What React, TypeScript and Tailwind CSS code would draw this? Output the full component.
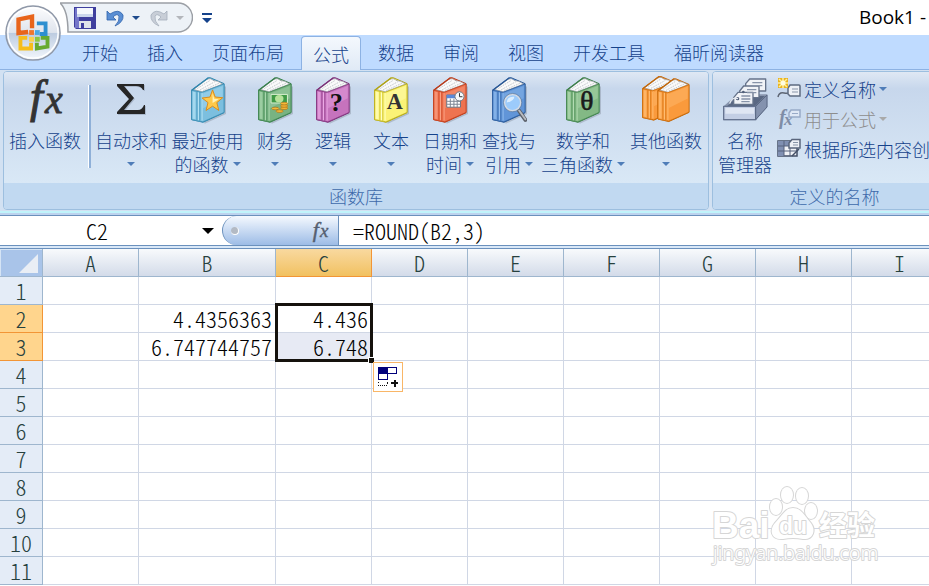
import React from "react";

const tabs = ["开始", "插入", "页面布局", "公式", "数据", "审阅", "视图", "开发工具", "福昕阅读器"];

const columns = [
  { name: "A", width: "w-24" },
  { name: "B", width: "w-[137px]" },
  { name: "C", width: "w-24" },
  { name: "D", width: "w-24" },
  { name: "E", width: "w-24" },
  { name: "F", width: "w-24" },
  { name: "G", width: "w-24" },
  { name: "H", width: "w-24" },
  { name: "I", width: "w-24" },
];

const rows = [1, 2, 3, 4, 5, 6, 7, 8, 9, 10, 11];

const cells: Record<string, string> = {
  B2: "4.4356363",
  B3: "6.747744757",
  C2: "4.436",
  C3: "6.748",
};

const Arrow = ({ className = "text-[#4f7db8]" }: { className?: string }) => (
  <svg viewBox="0 0 8 4" className={`w-2 h-1 shrink-0 ${className}`} fill="currentColor" aria-hidden="true">
    <path d="M0 0h8L4 4z" />
  </svg>
);

type BookProps = {
  light: string;
  main: string;
  dark: string;
  children?: React.ReactNode;
};

const BookShape = ({ light, main, dark }: BookProps) => (
  <g strokeLinejoin="round">
    <path d="M3 41 54 3 60 3 102 21V110L38 139 3 131z" fill={main} stroke={dark} strokeWidth="3" />
    <path d="M9 39 48 9Q62 2 68 11Q84 12 98 22L36 46z" fill="#fafafa" stroke="#8a8f96" strokeWidth="2" />
    <path d="M20 36 58 12M29 40 74 15M38 42 86 20" stroke="#c3c7cc" strokeWidth="3" strokeDasharray="5 3" />
    <path d="M3 41 33 47V138L3 131z" fill={main} />
    <path d="M33 47 102 22V109L36 138z" fill={main} />
    <path d="M38 51 98 28V66L38 96z" fill={light} opacity=".4" />
    <path d="M6 45 15 47V130L6 128z" fill={light} opacity=".7" />
    <path d="M19 46V133M28 47V135" stroke={dark} strokeWidth="3" opacity=".55" />
    <path d="M24 47V133M35 48V134" stroke={light} strokeWidth="3" />
    <path d="M3 41 34 48 102 22V109L37 138 3 131z" fill="none" stroke={dark} strokeWidth="2.500" opacity=".85" />
    <path d="M3 41 54 3" stroke={dark} strokeWidth="4" />
  </g>
);

const Book = ({ children, ...colors }: BookProps) => (
  <svg viewBox="-2 -1 110 144" className="w-9 h-12" fill="none" aria-hidden="true">
    <path d="M42 141 106 112V30" stroke="#7f8a99" strokeWidth="5" opacity=".4" />
    <BookShape {...colors} />
    {children}
  </svg>
);

const StarIcon = () => (
  <Book light="#b4e2f4" main="#7cbfdf" dark="#2f86ad">
    <path
      d="M67 40 75 62 98 64 80 79 86 103 67 90 47 103 53 79 35 65 59 62z"
      fill="#ffc94a"
      stroke="#d98b1c"
      strokeWidth="3"
    />
    <path d="M67 50 72 67 86 69 67 80z" fill="#fff2b8" />
  </Book>
);

const MoneyIcon = () => (
  <Book light="#a9d8ae" main="#78b382" dark="#38804b">
    <path d="M41 54H91V80H41z" fill="#3f9a46" stroke="#d9efd0" strokeWidth="3" />
    <ellipse cx="66" cy="67" rx="13" ry="11" fill="#b6e29b" />
    <g fill="#f4b93a" stroke="#a86d12" strokeWidth="2">
      <ellipse cx="81" cy="96" rx="11" ry="4" />
      <ellipse cx="81" cy="89" rx="11" ry="4" />
      <ellipse cx="81" cy="82" rx="11" ry="4" />
      <ellipse cx="54" cy="97" rx="11" ry="4" />
      <ellipse cx="67" cy="105" rx="11" ry="4" />
    </g>
  </Book>
);

const LogicIcon = () => (
  <Book light="#ecaae6" main="#c673bd" dark="#7c2f78">
    <text x="63" y="104" textAnchor="middle" fontFamily="Liberation Serif, serif" fontWeight="700" fontSize="80" fill="#111">?</text>
  </Book>
);

const TextIcon = () => (
  <Book light="#ffffc2" main="#fbf276" dark="#b3a50f">
    <text x="65" y="98" textAnchor="middle" fontFamily="Liberation Serif, serif" fontWeight="700" fontSize="68" fill="#333">A</text>
  </Book>
);

const DateIcon = () => (
  <Book light="#f9a184" main="#ee7350" dark="#bd3a17">
    <path d="M43 56H85V93H43z" fill="#fff" stroke="#69727f" strokeWidth="3" />
    <path d="M43 55H76V66H43z" fill="#5a88d8" />
    <path d="M44 75H85M44 84H85M54 67V93M65 67V93M75 67V93" stroke="#7c8593" strokeWidth="3" />
    <circle cx="82" cy="60" r="14" fill="#f7f9fb" stroke="#6c7480" strokeWidth="3" />
    <path d="M82 50V61H91" stroke="#333" strokeWidth="3" />
  </Book>
);

const SearchIcon = () => (
  <Book light="#92bdee" main="#6195d8" dark="#275796">
    <path d="M83 103 103 132" stroke="#5b6069" strokeWidth="12" strokeLinecap="round" />
    <path d="M84 103 103 130" stroke="#b6bac0" strokeWidth="6" strokeLinecap="round" />
    <circle cx="64" cy="79" r="25" fill="#9ccbfb" stroke="#d4dbe5" strokeWidth="5" />
    <circle cx="64" cy="79" r="28" stroke="#5f7897" strokeWidth="2" />
    <path d="M46 79Q48 59 69 61Q70 73 46 79z" fill="#dceeff" />
  </Book>
);

const MathIcon = () => (
  <Book light="#b4dcb3" main="#83b985" dark="#3c8049">
    <text x="65" y="103" textAnchor="middle" fontFamily="Liberation Serif, serif" fontSize="84" fill="#1a1a1a" stroke="#1a1a1a" strokeWidth="2">θ</text>
  </Book>
);

const MoreIcon = () => {
  const colors = { light: "#ffc077", main: "#fa9a3c", dark: "#c56808" };
  return (
    <svg viewBox="-2 -1 154 144" className="w-[51px] h-12" fill="none" aria-hidden="true">
      <g transform="translate(0 -3) scale(.97)">
        <BookShape {...colors} />
      </g>
      <g transform="translate(46 4) scale(.95)">
        <BookShape {...colors} />
      </g>
    </svg>
  );
};

const FxIcon = ({ className = "" }: { className?: string }) => (
  <svg viewBox="0 0 42 48" className={`overflow-visible ${className}`} fill="currentColor" stroke="currentColor" aria-hidden="true">
    <g fontFamily="Liberation Serif, serif" fontStyle="italic">
      <text x="6" y="36" fontSize="46" strokeWidth="1">f</text>
      <text x="21" y="37" fontSize="40" strokeWidth=".8">x</text>
    </g>
  </svg>
);

const SigmaIcon = () => (
  <svg viewBox="0 0 34 46" className="w-[34px] h-12" aria-hidden="true">
    <path d="M3 7H30V13H29Q27 9 22 9H10L20 21 10 33H24Q28 33 30 28H31V37H3V35L15 22 3 9z" fill="#8a97ab" opacity=".5" transform="translate(1 1)" />
    <path d="M3 7H30V13H29Q27 9 22 9H10L20 21 10 33H24Q28 33 30 28H31V37H3V35L15 22 3 9z" fill="#262626" />
  </svg>
);

const NameManagerIcon = () => (
  <svg viewBox="0 0 135 138" className="w-[45px] h-12" fill="none" strokeLinejoin="round" aria-hidden="true">
    <path d="M2 88 42 52H133V90L98 130H2z" fill="#8794ad" />
    <path d="M12 88 45 57H126L96 88z" fill="#5a6883" />
    <g fill="#f1f3f7" stroke="#66738a" strokeWidth="4">
      <path d="M68 20 80 6H128V42H68z" />
      <path d="M50 42 62 27H108V62H50z" />
      <path d="M32 62 45 46H90V82H32z" />
    </g>
    <path d="M88 17H118M88 26H118M72 38H100M72 47H100M55 57H82M55 66H82M55 74H80" stroke="#8793a8" strokeWidth="4" />
    <circle cx="44" cy="65" r="5" fill="#53617b" />
    <circle cx="61" cy="45" r="4" fill="#53617b" />
    <path d="M20 80Q26 58 45 65" stroke="#e5e9f0" strokeWidth="4" />
    <path d="M2 88H98V128H2z" fill="#c3cee4" stroke="#667491" strokeWidth="4" />
    <path d="M7 93H93V110H7z" fill="#dfe6f3" />
    <path d="M98 88 132 54V90L98 128z" fill="#8492ae" stroke="#5b6984" strokeWidth="3" />
  </svg>
);

const DefineIcon = () => (
  <svg viewBox="0 0 24 22" className="w-6 h-[22px] shrink-0" fill="none" aria-hidden="true">
    <path d="M1 19Q2 14 7 15T13 14" stroke="#5e6674" strokeWidth="1.500" />
    <path d="M11 10 13 7H22Q23 7 23 8V18H13L11 16z" fill="#eef1f6" stroke="#5e6b80" strokeWidth="1.500" />
    <path d="M15 11H21M15 14H21" stroke="#8995a8" />
    <path d="M1 0H11V10H1z" fill="#e9b321" />
    <path d="M6 0V10M1 5H11M2 1 10 9M10 1 2 9" stroke="#fff09a" strokeWidth="1.500" />
    <circle cx="6" cy="5" r="2.500" fill="#fffce0" />
  </svg>
);

const UseFormulaIcon = () => (
  <svg viewBox="0 0 24 22" className="w-6 h-[22px] shrink-0 overflow-visible" aria-hidden="true">
    <g fontFamily="Liberation Serif, serif" fontStyle="italic" fontWeight="700" fill="#7f8da6">
      <text x="2" y="16" fontSize="20">f</text>
      <text x="7" y="17" fontSize="17">x</text>
    </g>
    <path d="M12 5 14 2H23V9H12z" fill="#dfe8f5" stroke="#98aac7" strokeWidth="1.500" />
    <path d="M15 5.500H21" stroke="#98aac7" />
  </svg>
);

const CreateIcon = () => (
  <svg viewBox="0 0 24 22" className="w-6 h-[22px] shrink-0" fill="none" aria-hidden="true">
    <path d="M1 3H20V18H1z" fill="#f1f3f7" stroke="#434f66" strokeWidth="1.500" />
    <path d="M1 3H13V8H1z M1 8H7V18H1z" fill="#8090b2" />
    <path d="M1 8H20M1 13H20M7 3V18M13 3V18" stroke="#56637c" strokeWidth="1" />
    <path d="M12 5 15 1.500H23V10H12z" fill="#eef1f6" stroke="#5a667c" strokeWidth="1.500" />
    <path d="M16 4.500H21M16 7H21" stroke="#8995a8" />
    <path d="M15 18 22 11" stroke="#434f66" strokeWidth="1.500" />
  </svg>
);

const OfficeButton = () => (
  <button aria-label="Office" className="absolute left-1 top-1 z-10">
    <svg viewBox="0 0 60 60" className="w-[58px] h-[58px]" fill="none" aria-hidden="true">
      <defs>
        <linearGradient id="orb" x1="0" y1="0" x2="0" y2="1">
          <stop offset="0" stopColor="#fdfdfe" />
          <stop offset=".49" stopColor="#dfe4ed" />
          <stop offset=".5" stopColor="#bccbe0" />
          <stop offset="1" stopColor="#f4f8fd" />
        </linearGradient>
      </defs>
      <circle cx="30" cy="30" r="28" fill="url(#orb)" stroke="#8f98a8" strokeWidth="1.500" />
      <circle cx="30" cy="30" r="26" stroke="#fff" strokeWidth="1.500" />
      <path d="M25 29 15 30V16L29 13V25" stroke="#e8641b" strokeWidth="4.500" />
      <path d="M34 20H43V31H37" stroke="#2d8fd0" strokeWidth="4" />
      <path d="M24 35H17V46L28 46V40" stroke="#f6bd1b" strokeWidth="4" />
      <path d="M38 35H45V44L34 46V40" stroke="#67aa31" strokeWidth="4" />
      <path d="M26 27H31V32H26z" fill="#f0762c" />
      <path d="M32 27H37V32H32z" fill="#4ca8e2" />
      <path d="M26 34H31V39H26z" fill="#fbd04a" />
      <path d="M32 34H37V39H32z" fill="#8cc63f" />
    </svg>
  </button>
);

const QuickAccess = () => (
  <div className="relative ml-[60px] w-[133px] h-8 flex items-center pl-[14px]">
    <svg viewBox="0 0 133 32" className="absolute inset-0 w-full h-full" fill="none" aria-hidden="true">
      <path d="M0 1Q8 8 8 30H118A14 14 0 0 0 118 1z" fill="#edf2f7" />
      <path d="M0 1Q8 8 8 30H118A14 14 0 0 0 118 1z" stroke="#9b9fa5" strokeWidth="1.500" />
    </svg>
    <button aria-label="保存" className="relative">
      <svg viewBox="0 0 22 22" className="w-[22px] h-[22px]" aria-hidden="true">
        <path d="M0 0H22V22H2L0 20z" fill="#3f3f9e" />
        <path d="M1 1H5V21H1z" fill="#7476c9" />
        <path d="M3 1H19V10H3z" fill="#f4f7fc" />
        <path d="M3 7H19V10H3z" fill="#cbd6ec" />
        <path d="M5 14H17V21H5z" fill="#dfe3ea" />
        <path d="M7 16H10V21H7z" fill="#3f3f9e" />
      </svg>
    </button>
    <button aria-label="撤消" className="relative ml-2.5">
      <svg viewBox="0 0 18 18" className="w-[18px] h-[18px]" aria-hidden="true">
        <path d="M1 2V11H10L7 8Q11 4 13 7Q14 12 9 17Q18 13 17 6Q13-1 4 5z" fill="#5a8fd4" stroke="#2e62ab" strokeWidth=".8" />
      </svg>
    </button>
    <button aria-label="撤消选项" className="relative ml-2">
      <Arrow className="text-[#1e4a8c]" />
    </button>
    <button aria-label="恢复" className="relative ml-2.5" disabled>
      <svg viewBox="0 0 18 18" className="w-[18px] h-[18px] -scale-x-100" aria-hidden="true">
        <path d="M1 2V11H10L7 8Q11 4 13 7Q14 12 9 17Q18 13 17 6Q13-1 4 5z" fill="#c8ced7" stroke="#a4aebb" strokeWidth=".8" />
      </svg>
    </button>
    <button aria-label="恢复选项" className="relative ml-2" disabled>
      <Arrow className="text-[#b3b6bb]" />
    </button>
  </div>
);

type RibbonButtonProps = {
  icon: React.ReactNode;
  label: string;
  second?: string;
  arrow?: boolean;
  className: string;
};

const RibbonButton = ({ icon, label, second, arrow = true, className }: RibbonButtonProps) => (
  <button className={`flex flex-col items-center shrink-0 pt-1 text-[18px] leading-6 text-[#15428b] whitespace-nowrap ${className}`}>
    <span className="h-12 flex items-center justify-center">{icon}</span>
    <span className="mt-1">{label}</span>
    <span className="h-6 flex items-center gap-1">
      {second}
      {arrow && <Arrow />}
    </span>
  </button>
);

const RibbonGroup = ({ title, children, className = "" }: { title: string; children: React.ReactNode; className?: string }) => (
  <section
    className={`shrink-0 flex flex-col rounded-[4px] border border-[#9dbfdf] overflow-hidden shadow-[inset_1px_1px_0_#eef5fc] ${className}`}
  >
    <div className="h-[111px] flex bg-linear-to-b from-[#dfe8f4] from-0% via-[#c7d7ec] via-15% to-[#d9e8f6] to-100%">{children}</div>
    <h2 className="h-[26px] text-center text-[18px] leading-[26px] text-[#3e6aaa] bg-[#c1d9f1]">{title}</h2>
  </section>
);

const Ribbon = () => (
  <div className="flex gap-[3px] pl-[3px] pt-px pb-px bg-[#d2e1f2] border-b-2 border-[#c0f4fb] overflow-hidden">
    <RibbonGroup title="函数库" className="w-[706px]">
      <RibbonButton className="w-[82px]" icon={<FxIcon className="w-[42px] h-12 text-[#333]" />} label="插入函数" arrow={false} />
      <span className="w-[3px] h-[83px] mt-[13px] ml-0.5 mr-0.5 bg-[#8fb0d8] border-l border-white" />
      <RibbonButton className="w-[76px]" icon={<SigmaIcon />} label="自动求和" />
      <RibbonButton className="w-[77px]" icon={<StarIcon />} label="最近使用" second="的函数" />
      <RibbonButton className="w-[58px]" icon={<MoneyIcon />} label="财务" />
      <RibbonButton className="w-[58px]" icon={<LogicIcon />} label="逻辑" />
      <RibbonButton className="w-[58px]" icon={<TextIcon />} label="文本" />
      <RibbonButton className="w-[60px]" icon={<DateIcon />} label="日期和" second="时间" />
      <RibbonButton className="w-[58px]" icon={<SearchIcon />} label="查找与" second="引用" />
      <RibbonButton className="w-[90px]" icon={<MathIcon />} label="数学和" second="三角函数" />
      <RibbonButton className="w-[76px]" icon={<MoreIcon />} label="其他函数" />
    </RibbonGroup>
    <RibbonGroup title="定义的名称">
      <RibbonButton className="w-16" icon={<NameManagerIcon />} label="名称" second="管理器" arrow={false} />
      <div className="flex flex-col pt-0.5 pr-2 text-[18px] leading-[30px] text-[#15428b] whitespace-nowrap">
        <button className="h-[30px] flex items-center gap-[3px]">
          <DefineIcon />
          定义名称
          <Arrow className="text-[#4f7db8]" />
        </button>
        <button className="h-[30px] flex items-center gap-[3px] text-[#8d8d8d]" disabled>
          <UseFormulaIcon />
          用于公式
          <Arrow className="text-[#a9a9a9]" />
        </button>
        <button className="h-[30px] flex items-center gap-[3px]">
          <CreateIcon />
          根据所选内容创建
        </button>
      </div>
    </RibbonGroup>
  </div>
);

const FormulaBar = () => (
  <div className="mt-0.5 h-[31px] flex bg-white border-y border-[#6b91bd] text-[22px] [font-feature-settings:'hwid'] text-black">
    <input aria-label="名称框" defaultValue="C2" className="w-[194px] text-center outline-none" />
    <button aria-label="名称列表" className="w-7 flex items-center justify-center">
      <svg viewBox="0 0 12 6" className="w-3 h-1.5" aria-hidden="true">
        <path d="M0 0H12L6 6z" />
      </svg>
    </button>
    <div className="w-[117px] flex items-center justify-between pl-2 pr-2 rounded-l-full border-l border-r border-[#6b91bd] bg-linear-to-b from-[#f5f9fe] to-[#9dbce6]">
      <span className="w-2 h-2 rounded-full bg-[#b3bac4] border-r border-b border-white" />
      <button aria-label="插入函数">
        <FxIcon className="w-5 h-6 text-[#555f70]" />
      </button>
    </div>
    <input aria-label="编辑栏" defaultValue="=ROUND(B2,3)" className="flex-1 min-w-0 pl-3.5 outline-none" />
  </div>
);

const Selection = () => (
  <div className="absolute -left-px -top-0.5 w-[98px] h-[59px] border-[3px] border-[#15120d] z-10 pointer-events-none">
    <span className="absolute -right-1 -bottom-1 w-1.5 h-1.5 bg-[#15120d] border-l border-t border-white" />
  </div>
);

const AutoFill = () => (
  <button
    aria-label="自动填充选项"
    className="absolute left-[97px] top-[57px] w-[30px] h-[30px] z-20 bg-white border border-[#f9b667] flex items-center justify-center"
  >
    <svg viewBox="0 0 22 22" className="w-[22px] h-[22px]" fill="none" shapeRendering="crispEdges" aria-hidden="true">
      <path d="M1 1H11V7H1z" fill="#00007b" />
      <path d="M1.500 1.500H19.500V7.500H1.500z M1.500 7.500H10.500V13.500H1.500z" stroke="#00007b" />
      <path d="M1 16.500H2M1 19.500H11" stroke="#111" strokeDasharray="1 1" />
      <path d="M10 16.500H11M14 17H21M17.500 13.500V20.500" stroke="#111" strokeWidth="2" />
    </svg>
  </button>
);

const Sheet = () => (
  <table className="table-fixed border-separate border-spacing-0 w-[907px] text-[22px] leading-[27px] [font-feature-settings:'hwid'] text-black">
    <thead>
      <tr className="h-7">
        <th aria-label="全选" className="w-[43px] p-0 bg-[#a9c4e9] border-r border-b border-[#9eb6ce] shadow-[inset_1px_1px_0_#d5e4f5]">
          <svg viewBox="0 0 42 27" className="w-full h-[27px]" aria-hidden="true">
            <path d="M38 5V24H19z" fill="#e9eef5" />
          </svg>
        </th>
        {columns.map(({ name, width }) => (
          <th
            key={name}
            scope="col"
            className={`p-0 border-r border-b font-light text-[#27413e] bg-linear-to-b ${width} ${
              name === "C" ? "from-[#f9d99f] to-[#f1c15f] border-[#f29536]" : "from-[#f8fafc] to-[#d3dbe9] border-[#9eb6ce]"
            }`}
          >
            {name}
          </th>
        ))}
      </tr>
    </thead>
    <tbody>
      {rows.map((row) => (
        <tr key={row} className="h-7">
          <th
            scope="row"
            className={`p-0 border-r border-b font-light text-[#27413e] ${
              row === 2 || row === 3 ? "bg-[#ffd58d] border-[#f29536]" : "bg-[#e4ecf7] border-[#9eb6ce]"
            }`}
          >
            {row}
          </th>
          {columns.map(({ name }) => {
            const id = `${name}${row}`;
            return (
              <td
                key={id}
                className={`relative p-0 pr-[3px] border-r border-b border-[#d0d7e5] text-right ${id === "C3" ? "bg-[#e7eaf4]" : ""}`}
              >
                {cells[id]}
                {id === "C2" && <Selection />}
                {id === "C2" && <AutoFill />}
              </td>
            );
          })}
        </tr>
      ))}
    </tbody>
  </table>
);

const Watermark = () => (
  <svg
    viewBox="0 0 170 82"
    className="absolute right-[49px] bottom-[18px] w-[170px] h-[82px] pointer-events-none"
    fill="#fff"
    stroke="#d6d6d6"
    paintOrder="stroke"
    strokeLinejoin="round"
    aria-hidden="true"
  >
    <g fontFamily="Liberation Sans, sans-serif" fontWeight="700" strokeWidth="2">
      <text x="2" y="52" fontSize="37">Bai</text>
      <g strokeWidth="2">
        <ellipse cx="66" cy="21" rx="6" ry="8" />
        <ellipse cx="77" cy="9" rx="6" ry="8" />
        <ellipse cx="92" cy="10" rx="6" ry="8" />
        <ellipse cx="101" cy="25" rx="6" ry="8" />
        <path d="M83 22C91 22 95 30 100 36C107 44 103 54 93 53Q83 51 73 53C61 54 59 44 65 37C72 30 75 22 83 22z" />
      </g>
      <text x="69" y="48" fontSize="23">du</text>
      <text x="109" y="50" fontSize="28" fontFamily="Noto Sans CJK SC, sans-serif">经验</text>
    </g>
    <text x="3" y="74" fontSize="20" strokeWidth="2" fontFamily="Noto Sans, sans-serif">jingyan.baidu.com</text>
  </svg>
);

const App = () => {
  return (
    <div className="relative min-h-screen bg-white overflow-hidden font-['Noto_Sans_CJK_SC',sans-serif] font-light">
      <OfficeButton />
      <header className="h-[35px] flex items-center">
        <QuickAccess />
        <button aria-label="自定义快速访问工具栏" className="ml-2 text-[#15428b]">
          <svg viewBox="0 0 12 12" className="w-3 h-3" fill="currentColor" aria-hidden="true">
            <path d="M1 1H11V3H1z M1 6H11L6 11z" />
          </svg>
        </button>
        <h1 className="ml-auto pr-[3px] font-['Open_Sans',sans-serif] font-normal text-[19px] text-black">Book1 -</h1>
      </header>

      <nav className="h-[35px] flex items-end gap-px pl-[68px] bg-[#bfdbff] border-b border-[#8db2e3] text-[18px] leading-[34px] text-[#15428b] whitespace-nowrap">
        {tabs.map((tab) =>
          tab === "公式" ? (
            <button
              key={tab}
              className="h-[34px] -mb-px mx-0.5 px-[11px] rounded-t-[4px] border border-b-0 border-[#8db2e3] bg-linear-to-b from-[#f4f8fd] to-[#e0eaf6]"
            >
              {tab}
            </button>
          ) : (
            <button key={tab} className="h-[34px] px-3.5">
              {tab}
            </button>
          )
        )}
      </nav>

      <div className="bg-[#bdd3ee]">
        <Ribbon />
        <FormulaBar />
        <div className="h-[3px] bg-[#d9e8f8] border-b border-[#6b91bd]" />
      </div>

      <main className="overflow-hidden">
        <Sheet />
      </main>
      <Watermark />
    </div>
  );
};

export default App;
